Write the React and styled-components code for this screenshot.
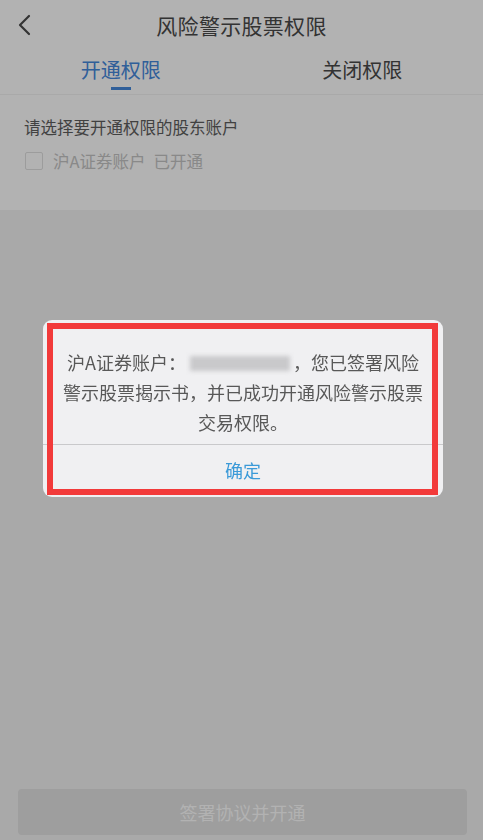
import React from "react";
import styled, { createGlobalStyle } from "styled-components";

const Global = createGlobalStyle`
  html, body { margin: 0; padding: 0; }
  body {
    font-family: "Noto Sans CJK SC", "Noto Sans", sans-serif;
    background: #f3f3f3;
  }
  * { box-sizing: border-box; }
`;

const Page = styled.div`
  min-height: 100vh;
  display: flex;
  flex-direction: column;
  background: #f3f3f3;
`;

const TopPanel = styled.div`
  background: #ffffff;
`;

const Header = styled.header`
  height: 50px;
  display: flex;
  align-items: center;
  justify-content: center;
  position: relative;
`;

const BackButton = styled.button`
  position: absolute;
  left: 12px;
  top: 12px;
  width: 24px;
  height: 26px;
  padding: 0;
  border: 0;
  background: none;
  display: flex;
  align-items: center;
  justify-content: center;
`;

const Title = styled.h1`
  margin: 0;
  font-size: 21px;
  font-weight: 400;
  color: #4a4a4a;
  letter-spacing: 0.3px;
`;

const Tabs = styled.nav`
  height: 45px;
  display: grid;
  grid-template-columns: 1fr 1fr;
  border-bottom: 1px solid #f2f2f2;
`;

const Tab = styled.div`
  position: relative;
  display: flex;
  align-items: center;
  justify-content: center;
  padding-bottom: 6px;
  font-size: 20px;
  color: ${(p) => (p.$active ? "#4588dc" : "#4a4a4a")};
  &::after {
    content: "";
    display: ${(p) => (p.$active ? "block" : "none")};
    position: absolute;
    left: 50%;
    bottom: 4px;
    width: 20px;
    height: 3px;
    margin-left: -10px;
    background: #4588dc;
  }
`;

const Section = styled.section`
  padding: 20px 24px 37px;
  display: flex;
  flex-direction: column;
  gap: 10px;
`;

const Label = styled.div`
  font-size: 16.5px;
  line-height: 24px;
  color: #5e5e5e;
`;

const CheckRow = styled.label`
  display: flex;
  align-items: center;
  gap: 10px;
  font-size: 16.5px;
  line-height: 24px;
  color: #c4c4c4;
`;

const Box = styled.span`
  width: 18px;
  height: 18px;
  margin-left: 1px;
  border: 1px solid #e0e0e0;
  border-radius: 2px;
  background: #fff;
`;

const Status = styled.span`
  margin-left: 8px;
`;

const Spacer = styled.div`
  flex: 1;
`;

const Footer = styled.footer`
  padding: 0 16px 5px 18px;
`;

const SubmitButton = styled.button`
  width: 100%;
  height: 46px;
  border: 0;
  border-radius: 4px;
  background: #e2e2e2;
  color: #ffffff;
  font-family: inherit;
  font-size: 18px;
`;

const Overlay = styled.div`
  position: fixed;
  inset: 0;
  background: rgba(0, 0, 0, 0.3);
  display: flex;
  align-items: center;
  justify-content: center;
  padding: 0 0 23px 3px;
`;

const Dialog = styled.div`
  position: relative;
  width: 400px;
  background: #f0f0f2;
  border-radius: 9px;
  overflow: hidden;
`;

const Message = styled.p`
  margin: 0;
  padding: 27px 20px 7px;
  text-align: center;
  font-size: 18px;
  line-height: 30px;
  color: #585858;
`;

const Masked = styled.span`
  display: inline-block;
  width: 100px;
  height: 15px;
  margin: 0 3px 0 4px;
  vertical-align: -1px;
  background: #c9c9cb;
  filter: blur(2px);
`;

const DialogAction = styled.button`
  display: block;
  width: 100%;
  height: 53px;
  border: 0;
  border-top: 1px solid #c9c9cb;
  background: transparent;
  font-family: inherit;
  font-size: 18px;
  color: #3b9ad8;
  padding: 0 0 2px;
`;

const Highlight = styled.div`
  position: absolute;
  top: 3px;
  left: 4px;
  right: 5px;
  bottom: 2px;
  border: 6px solid #f23a3a;
  pointer-events: none;
`;

export default function App() {
  return (
    <>
      <Global />
      <Page>
        <TopPanel>
          <Header>
            <BackButton aria-label="返回">
              <svg width="14" height="22" viewBox="0 0 14 22" fill="none">
                <path
                  d="M12 2 L3 11 L12 20"
                  stroke="#4a4a4a"
                  strokeWidth="2.2"
                  strokeLinecap="round"
                  strokeLinejoin="round"
                />
              </svg>
            </BackButton>
            <Title>风险警示股票权限</Title>
          </Header>
          <Tabs>
            <Tab $active>开通权限</Tab>
            <Tab>关闭权限</Tab>
          </Tabs>
          <Section>
            <Label>请选择要开通权限的股东账户</Label>
            <CheckRow>
              <Box />
              <span>
                沪A证券账户<Status>已开通</Status>
              </span>
            </CheckRow>
          </Section>
        </TopPanel>
        <Spacer />
        <Footer>
          <SubmitButton>签署协议并开通</SubmitButton>
        </Footer>
      </Page>
      <Overlay>
        <Dialog>
          <Message>
            沪A证券账户：<Masked />，您已签署风险警示股票揭示书，并已成功开通风险警示股票交易权限。
          </Message>
          <DialogAction>确定</DialogAction>
          <Highlight />
        </Dialog>
      </Overlay>
    </>
  );
}
